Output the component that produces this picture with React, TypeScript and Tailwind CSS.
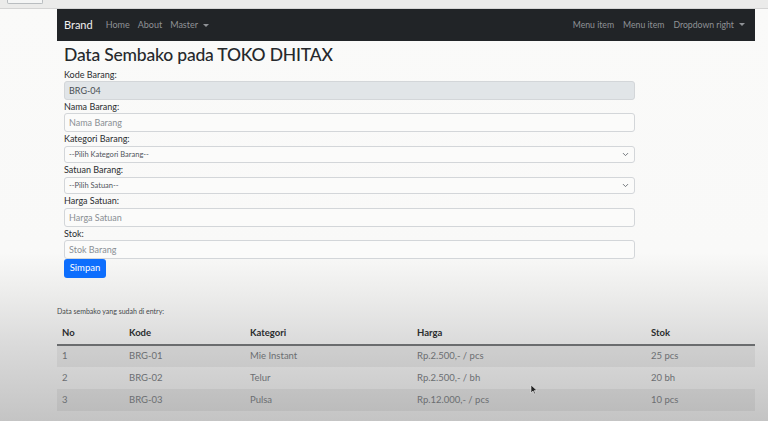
import { ChevronDown } from 'lucide-react';

const rows = [
  { no: 1, kode: 'BRG-01', kategori: 'Mie Instant', harga: 'Rp.2.500,- / pcs', stok: '25 pcs' },
  { no: 2, kode: 'BRG-02', kategori: 'Telur', harga: 'Rp.2.500,- / bh', stok: '20 bh' },
  { no: 3, kode: 'BRG-03', kategori: 'Pulsa', harga: 'Rp.12.000,- / pcs', stok: '10 pcs' },
];

function Caret() {
  return <span className="ml-[5px] inline-block border-x-[3px] border-t-[3px] border-x-transparent border-t-current align-middle" />;
}

function Label({ children }: { children: string }) {
  return <label className="block h-[13px] text-[9px] leading-[13px] text-[#2a2d30]">{children}</label>;
}

function TextInput({ placeholder, value, readOnly }: { placeholder?: string; value?: string; readOnly?: boolean }) {
  return (
    <input
      readOnly={readOnly}
      defaultValue={value}
      placeholder={placeholder}
      className={`block h-[19px] w-[571px] rounded-[3px] border border-[#d3d6d9] px-[4px] text-[9px] text-[#4a4f55] outline-none placeholder:text-[#8a8f94] ${
        readOnly ? 'bg-[#e1e5e8]' : 'bg-[#fbfbfa]'
      }`}
    />
  );
}

function Select({ placeholder }: { placeholder: string }) {
  return (
    <div className="flex h-[17px] w-[571px] items-center justify-between rounded-[3px] border border-[#d3d6d9] bg-[#fbfbfa] pl-[4px] pr-[4px]">
      <span className="text-[7.5px] text-[#50555a]">{placeholder}</span>
      <ChevronDown size={9} strokeWidth={2.5} className="text-[#6a6f74]" />
    </div>
  );
}

export default function App() {
  return (
    <div className="relative h-[421px] w-[768px] overflow-hidden bg-[linear-gradient(to_bottom,#fafaf9_0%,#f9f9f8_60%,#ececeb_70%,#dadada_82%,#c4c4c4_100%)] font-['Lato','Noto_Sans',sans-serif]">
      <div className="h-[9px] border-b border-[#d4d4d4] bg-[#ebebea] pl-[7px]">
        <div className="h-[4px] w-[36px] rounded-b-[2px] border-x border-b border-[#b9bdc0] bg-[#f4f5f5]" />
      </div>

      <div className="ml-[57px] w-[698px]">
        <nav className="flex h-[32px] items-center bg-[#212427] px-[7px] text-[9px]">
          <span className="mr-[13px] text-[11px] text-[#f0f0f0]">Brand</span>
          <div className="flex gap-[8px] text-[#8f9296]">
            <span>Home</span>
            <span>About</span>
            <span className="flex items-center">
              Master
              <Caret />
            </span>
          </div>
          <div className="ml-auto mr-[3px] flex gap-[9px] text-[8.7px] text-[#8f9296]">
            <span>Menu item</span>
            <span>Menu item</span>
            <span className="flex items-center">
              Dropdown right
              <Caret />
            </span>
          </div>
        </nav>

        <div className="px-[7px]">
          <h1 className="h-[27px] text-[17.5px] leading-[27px] font-medium tracking-[-0.2px] text-[#26292c]">
            Data Sembako pada TOKO DHITAX
          </h1>
          <form className="flex flex-col" onSubmit={(e) => e.preventDefault()}>
            <Label>Kode Barang:</Label>
            <TextInput value="BRG-04" readOnly />
            <Label>Nama Barang:</Label>
            <TextInput placeholder="Nama Barang" />
            <div className="h-[14px]">
              <Label>Kategori Barang:</Label>
            </div>
            <Select placeholder="--Pilih Kategori Barang--" />
            <div className="h-[14px]">
              <Label>Satuan Barang:</Label>
            </div>
            <Select placeholder="--Pilih Satuan--" />
            <div className="h-[14px]">
              <Label>Harga Satuan:</Label>
            </div>
            <TextInput placeholder="Harga Satuan" />
            <Label>Stok:</Label>
            <TextInput placeholder="Stok Barang" />
            <button
              type="submit"
              className="h-[19px] w-[42px] rounded-[3px] bg-[#0d6efd] text-[9.5px] text-white"
            >
              Simpan
            </button>
          </form>
        </div>

        <p className="mt-[28px] text-[7px] leading-[10px] text-[#45484b]">Data sembako yang sudah di entry:</p>

        <table className="mt-[7px] w-[698px] table-fixed border-collapse text-left text-[9.5px]">
          <colgroup>
            <col className="w-[67px]" />
            <col className="w-[121px]" />
            <col className="w-[167px]" />
            <col className="w-[234px]" />
            <col />
          </colgroup>
          <thead>
            <tr className="h-[22px] border-b-2 border-[#6a6c6e] text-[#2b2d2f]">
              <th className="pl-[5px] font-bold">No</th>
              <th className="pl-[5px] font-bold">Kode</th>
              <th className="pl-[5px] font-bold">Kategori</th>
              <th className="pl-[5px] font-bold">Harga</th>
              <th className="pl-[5px] font-bold">Stok</th>
            </tr>
          </thead>
          <tbody className="text-[#6b6e71]">
            {rows.map((r, i) => (
              <tr key={r.no} className={`h-[22px] ${i % 2 === 0 ? 'bg-black/[0.05]' : ''}`}>
                <td className="pl-[5px]">{r.no}</td>
                <td className="pl-[5px]">{r.kode}</td>
                <td className="pl-[5px]">{r.kategori}</td>
                <td className="pl-[5px]">{r.harga}</td>
                <td className="pl-[5px]">{r.stok}</td>
              </tr>
            ))}
          </tbody>
        </table>
      </div>

      <svg className="absolute left-[530px] top-[384px]" width="8" height="11" viewBox="0 0 8 11">
        <path d="M1 1 L1 9 L3 7 L4.5 10 L5.5 9.5 L4.2 6.6 L7 6.6 Z" fill="#222" stroke="#eee" strokeWidth="0.6" />
      </svg>
    </div>
  );
}
